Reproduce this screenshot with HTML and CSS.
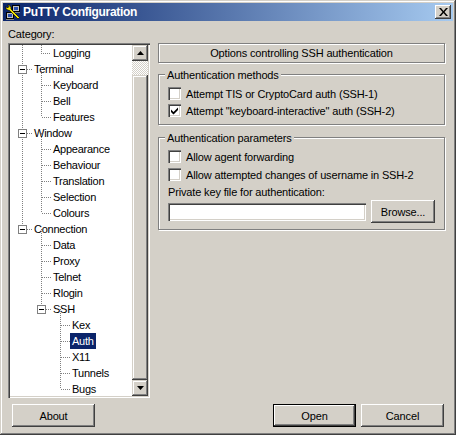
FILE: index.html
```html
<!DOCTYPE html>
<html lang="en">
<head>
<meta charset="UTF-8" />
<title>PuTTY Configuration</title>
<link rel="stylesheet" href="styles.css">
</head>
<body>
<div class="window">
  <div class="titlebar">
    <svg class="app-icon" width="16" height="16" viewBox="0 0 16 16">
      <rect x="7.500" y="1.500" width="7" height="6" fill="#c0c0c0" stroke="#000"/>
      <rect x="9" y="3" width="4" height="3" fill="#2a4fb0"/>
      <rect x="7" y="8" width="8" height="1" fill="#808080"/>
      <rect x="1.500" y="8.500" width="7" height="6" fill="#c0c0c0" stroke="#000"/>
      <rect x="3" y="10" width="4" height="3" fill="#2a4fb0"/>
      <rect x="1" y="15" width="8" height="1" fill="#808080"/>
      <path d="M1 2.500L2.500 4 4 2.500 2.500 1 4.500 1 6 3 6 5 14.500 13.500 13 15 4.500 6.500 2.500 6 1 4.500Z" fill="#f5e400" stroke="#000" stroke-width="0.7"/>
    </svg>
    <span class="title-text">PuTTY Configuration</span>
    <button class="close-btn" aria-label="Close">
      <svg width="9" height="8" viewBox="0 0 9 8"><path d="M0 0h2l2.500 3L7 0h2L5.500 4 9 8H7L4.500 5 2 8H0l3.500-4z" fill="#000"/></svg>
    </button>
  </div>

  <div class="main">
    <div class="left-col">
      <div class="cat-label">Category:</div>
      <div class="tree-box">
        <div class="tree">
          <svg class="tree-lines" width="122" height="351" viewBox="0 0 122 351">
            <path class="dots" d="M12.500 0V184 M12.500 24H22 M12.500 88H22 M12.500 184H22
              M31.500 0V8.500H41 M31.500 24V72 M31.500 40.500H41 M31.500 56.500H41 M31.500 72.500H41
              M31.500 88V168 M31.500 104.500H41 M31.500 120.500H41 M31.500 136.500H41 M31.500 152.500H41 M31.500 168.500H41
              M31.500 184V264 M31.500 200.500H41 M31.500 216.500H41 M31.500 232.500H41 M31.500 248.500H41 M31.500 264.500H41
              M50.500 264V344 M50.500 280.500H60 M50.500 296.500H60 M50.500 312.500H60 M50.500 328.500H60 M50.500 344.500H60"/>
            <g class="expander">
              <rect x="8.500" y="20.500" width="8" height="8"/><path d="M10 24.500h5"/>
              <rect x="8.500" y="84.500" width="8" height="8"/><path d="M10 88.500h5"/>
              <rect x="8.500" y="180.500" width="8" height="8"/><path d="M10 184.500h5"/>
              <rect x="27.500" y="260.500" width="8" height="8"/><path d="M29 264.500h5"/>
            </g>
          </svg>
          <div class="row lvl2"><span>Logging</span></div>
          <div class="row lvl1"><span>Terminal</span></div>
          <div class="row lvl2"><span>Keyboard</span></div>
          <div class="row lvl2"><span>Bell</span></div>
          <div class="row lvl2"><span>Features</span></div>
          <div class="row lvl1"><span>Window</span></div>
          <div class="row lvl2"><span>Appearance</span></div>
          <div class="row lvl2"><span>Behaviour</span></div>
          <div class="row lvl2"><span>Translation</span></div>
          <div class="row lvl2"><span>Selection</span></div>
          <div class="row lvl2"><span>Colours</span></div>
          <div class="row lvl1"><span>Connection</span></div>
          <div class="row lvl2"><span>Data</span></div>
          <div class="row lvl2"><span>Proxy</span></div>
          <div class="row lvl2"><span>Telnet</span></div>
          <div class="row lvl2"><span>Rlogin</span></div>
          <div class="row lvl2"><span>SSH</span></div>
          <div class="row lvl3"><span>Kex</span></div>
          <div class="row lvl3 selected"><span>Auth</span></div>
          <div class="row lvl3"><span>X11</span></div>
          <div class="row lvl3"><span>Tunnels</span></div>
          <div class="row lvl3"><span>Bugs</span></div>
        </div>
        <div class="scrollbar">
          <div class="sb-btn"><svg width="7" height="4" viewBox="0 0 7 4"><path d="M3.500 0L7 4H0z" fill="#000"/></svg></div>
          <div class="sb-track"></div>
          <div class="sb-thumb"></div>
          <div class="sb-btn"><svg width="7" height="4" viewBox="0 0 7 4"><path d="M0 0h7L3.500 4z" fill="#000"/></svg></div>
        </div>
      </div>
    </div>

    <div class="right-col">
      <div class="panel-header">Options controlling SSH authentication</div>

      <div class="group group-methods">
        <div class="group-title">Authentication methods</div>
        <div class="check-row"><span class="check"></span>Attempt TIS or CryptoCard auth (SSH-1)</div>
        <div class="check-row"><span class="check"><svg width="9" height="9" viewBox="0 0 9 9"><path d="M1 3.500l2.500 2.500L8 1.500v2.500L3.500 8.500 1 6z" fill="#000"/></svg></span>Attempt "keyboard-interactive" auth (SSH-2)</div>
      </div>

      <div class="group group-params">
        <div class="group-title">Authentication parameters</div>
        <div class="check-row"><span class="check"></span>Allow agent forwarding</div>
        <div class="check-row spaced"><span class="check"></span>Allow attempted changes of username in SSH-2</div>
        <div class="field-label">Private key file for authentication:</div>
        <div class="key-row">
          <input type="text" class="key-input">
          <button class="btn browse">Browse...</button>
        </div>
      </div>
    </div>
  </div>

  <div class="footer">
    <button class="btn about">About</button>
    <div class="footer-right">
      <button class="btn default">Open</button>
      <button class="btn">Cancel</button>
    </div>
  </div>
</div>
</body>
</html>
```

FILE: styles.css
```css
* {
  box-sizing: border-box;
}
body {
  margin: 0;
  background: #d4d0c8;
  font-family: "Liberation Sans", Arial, sans-serif;
  font-size: 11px;
  letter-spacing: -0.15px;
  color: #000;
}
.window {
  width: 456px;
  height: 435px;
  padding: 3px;
  background: #d4d0c8;
  box-shadow: inset -1px -1px 0 #404040, inset 1px 1px 0 #d4d0c8, inset -2px -2px 0 #808080, inset 2px 2px 0 #fff;
}
.titlebar {
  display: flex;
  align-items: center;
  width: 450px;
  height: 18px;
  padding: 0 2px;
  background: linear-gradient(to right, #0a246a, #a6caf0);
}
.app-icon {
  flex: none;
}
.title-text {
  flex: 1;
  margin-left: 2px;
  color: #fff;
  font-size: 12px;
  font-weight: bold;
  letter-spacing: -0.3px;
}
.close-btn {
  display: flex;
  align-items: center;
  justify-content: center;
  width: 16px;
  height: 14px;
  padding: 0;
  border: none;
  background: #d4d0c8;
  box-shadow: inset -1px -1px 0 #404040, inset 1px 1px 0 #fff, inset -2px -2px 0 #808080;
}

.main {
  display: flex;
  padding-left: 5px;
}
.left-col {
  width: 142px;
}
.cat-label {
  height: 22px;
  line-height: 14px;
  padding-top: 6px;
}
.tree-box {
  display: flex;
  height: 355px;
  padding: 2px;
  background: #fff;
  box-shadow: inset 1px 1px 0 #808080, inset 2px 2px 0 #404040, inset -1px -1px 0 #fff, inset -2px -2px 0 #d4d0c8;
}
.tree {
  position: relative;
  flex: 1;
  overflow: hidden;
}
.tree-lines {
  position: absolute;
  top: 0;
  left: 0;
}
.tree-lines .dots {
  fill: none;
  stroke: #808080;
  stroke-dasharray: 1 1;
  shape-rendering: crispEdges;
}
.expander rect {
  fill: #fff;
  stroke: #808080;
  shape-rendering: crispEdges;
}
.expander path {
  stroke: #000;
  shape-rendering: crispEdges;
}
.row {
  height: 16px;
  line-height: 16px;
  white-space: nowrap;
  letter-spacing: -0.25px;
}
.row span {
  display: inline-block;
  height: 16px;
  padding: 0 2px;
}
.lvl1 {
  padding-left: 22px;
}
.lvl2 {
  padding-left: 41px;
}
.lvl3 {
  padding-left: 60px;
}
.selected span {
  background: #0a246a;
  color: #fff;
}

.scrollbar {
  display: flex;
  flex-direction: column;
  flex: none;
  width: 16px;
  height: 351px;
}
.sb-btn {
  display: flex;
  align-items: center;
  justify-content: center;
  flex: none;
  height: 16px;
  background: #d4d0c8;
  box-shadow: inset -1px -1px 0 #404040, inset 1px 1px 0 #d4d0c8, inset -2px -2px 0 #808080, inset 2px 2px 0 #fff;
}
.sb-track {
  flex: none;
  height: 14px;
  background: repeating-conic-gradient(#d4d0c8 0 25%, #fff 0 50%) 0 0 / 2px 2px;
}
.sb-thumb {
  flex: 1;
  background: #d4d0c8;
  box-shadow: inset -1px -1px 0 #404040, inset 1px 1px 0 #d4d0c8, inset -2px -2px 0 #808080, inset 2px 2px 0 #fff;
}

.right-col {
  width: 287px;
  margin-left: 8px;
  padding-top: 22px;
}
.panel-header {
  height: 20px;
  line-height: 18px;
  text-align: center;
  border: 1px solid #808080;
  box-shadow: 1px 1px 0 #fff, inset 1px 1px 0 #fff;
}
.group {
  display: flex;
  flex-direction: column;
  border: 1px solid #808080;
  box-shadow: 1px 1px 0 #fff, inset 1px 1px 0 #fff;
  padding: 0 9px;
}
.group-methods {
  height: 51px;
  margin-top: 11px;
}
.group-params {
  height: 93px;
  margin-top: 12px;
}
.group-title {
  align-self: flex-start;
  height: 14px;
  line-height: 14px;
  margin: -7px 0 3px -3px;
  padding: 0 2px;
  background: #d4d0c8;
}
.check-row {
  display: flex;
  align-items: center;
  height: 17px;
  white-space: nowrap;
}
.check-row.spaced {
  margin-top: 1px;
}
.check {
  display: flex;
  align-items: center;
  justify-content: center;
  flex: none;
  width: 13px;
  height: 13px;
  margin-right: 5px;
  background: #fff;
  box-shadow: inset 1px 1px 0 #808080, inset 2px 2px 0 #404040, inset -1px -1px 0 #fff, inset -2px -2px 0 #d4d0c8;
}
.field-label {
  height: 14px;
  line-height: 14px;
  margin-top: 2px;
}
.key-row {
  display: flex;
  align-items: center;
  margin-top: 1px;
}
.key-input {
  width: 198px;
  height: 18px;
  padding: 0;
  border: none;
  background: #fff;
  box-shadow: inset 1px 1px 0 #808080, inset 2px 2px 0 #404040, inset -1px -1px 0 #fff, inset -2px -2px 0 #d4d0c8;
}
.btn {
  width: 83px;
  height: 23px;
  padding: 0;
  border: none;
  background: #d4d0c8;
  color: #000;
  font-family: inherit;
  font-size: 11px;
  letter-spacing: inherit;
  box-shadow: inset -1px -1px 0 #404040, inset 1px 1px 0 #fff, inset -2px -2px 0 #808080;
}
.browse {
  width: 64px;
  margin-left: 5px;
}
.default {
  box-shadow: inset 0 0 0 1px #000, inset -2px -2px 0 #404040, inset 2px 2px 0 #fff, inset -3px -3px 0 #808080;
}

.footer {
  display: flex;
  justify-content: space-between;
  margin-top: 6px;
  padding: 0 9px;
}
.footer-right {
  display: flex;
  gap: 5px;
}
```
